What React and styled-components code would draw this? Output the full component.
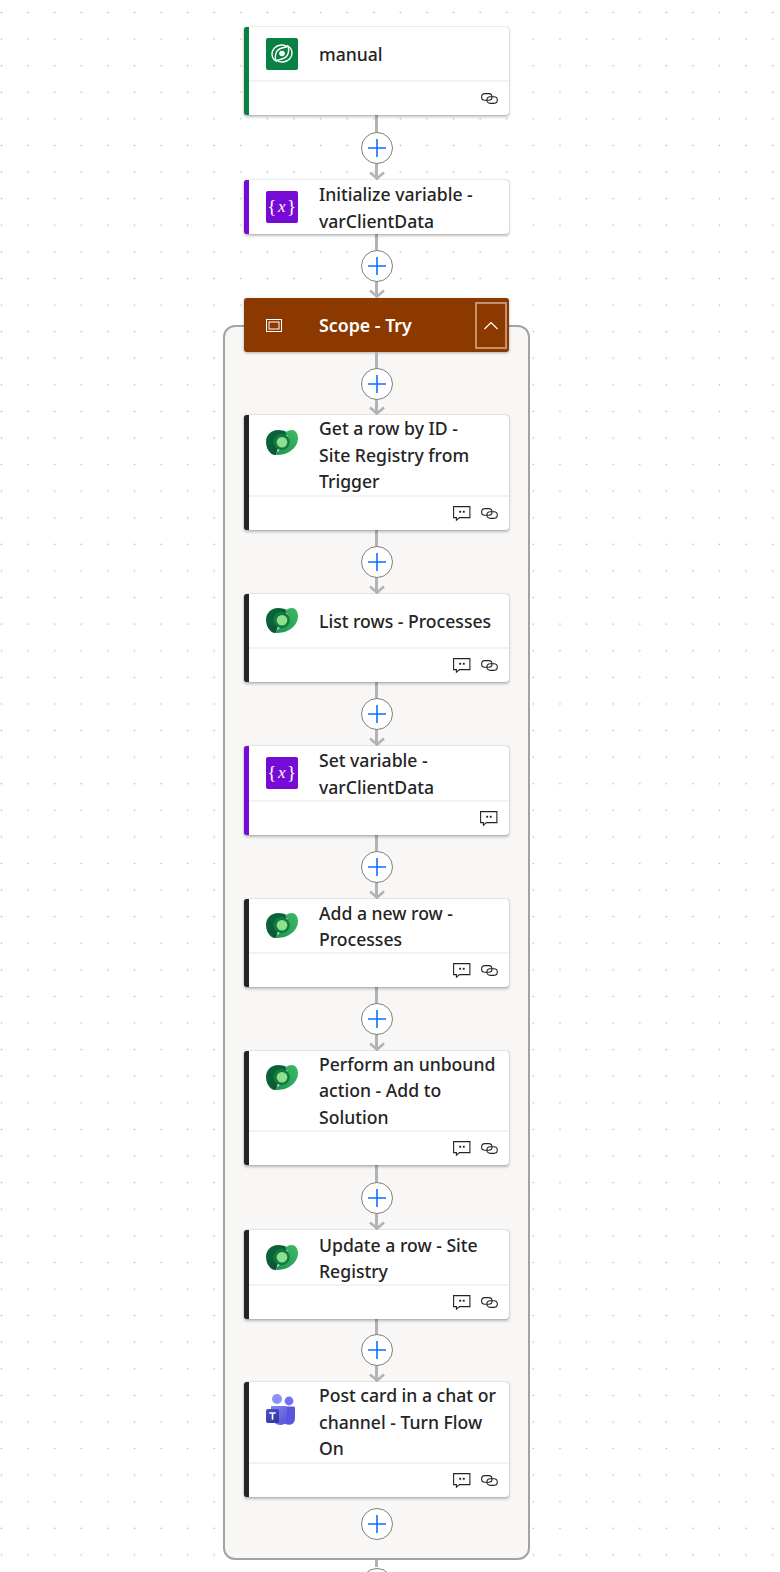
import React from 'react'
import styled, { createGlobalStyle } from 'styled-components'

const GlobalStyle = createGlobalStyle`
html, body {
    margin: 0;
    height: 1572px;
    overflow: hidden;
    background: #fff;
}
`

const Canvas = styled.div`
box-sizing: border-box;
height: 1572px;
overflow: hidden;
padding: 27px 27px 0 0;
display: flex;
flex-direction: column;
align-items: center;
font-family: "Noto Sans", "Open Sans", sans-serif;
background-color: #fff;
background-image: radial-gradient(circle, #bdbdbd 0.7px, transparent 1.1px);
background-size: 26.6px 26.6px;
background-position: -11.8px -0.8px;
`

const CardBox = styled.div`
position: relative;
z-index: 1;
box-sizing: border-box;
flex: none;
width: 265px;
background: #fff;
border-radius: 3px;
border-left: 5px solid ${p => p.$accent};
box-shadow: 0 0 1px rgba(0, 0, 0, 0.45), 0 1.5px 3px rgba(0, 0, 0, 0.25);
`

const CardHead = styled.div`
display: flex;
align-items: ${p => (p.$tall ? 'flex-start' : 'center')};
min-height: 53.3px;
box-sizing: border-box;
padding-left: 17px;
`

const IconSlot = styled.div`
flex: none;
width: 32px;
height: 32px;
margin-right: 21px;
display: flex;
align-items: center;
justify-content: flex-start;
${p => p.$tall && 'margin-top: 11px;'}
`

const Title = styled.div`
font-size: 17.6px;
font-weight: 500;
line-height: 26.5px;
color: #242424;
padding-right: 6px;
margin-top: ${p => (p.$tall ? 0 : 1)}px;
margin-bottom: ${p => (p.$tall ? 0 : -1)}px;
white-space: nowrap;
`

const CardFoot = styled.div`
display: flex;
align-items: center;
justify-content: flex-end;
gap: 10px;
height: 35px;
box-sizing: border-box;
padding-right: 11px;
border-top: 2px solid #f2f2f2;
`

const VarBadge = styled.div`
width: 32px;
height: 32px;
border-radius: 2px;
background: #770bd6;
color: #fff;
display: flex;
align-items: center;
justify-content: center;
font-family: "Liberation Serif", serif;
font-size: 19px;
letter-spacing: 0.5px;
line-height: 1;
& i { font-size: 17px; margin: 0 1px; }
`

const GreenBadge = styled.div`
width: 32px;
height: 32px;
border-radius: 2px;
background: #088142;
display: flex;
align-items: center;
justify-content: center;
`

const Connector = styled.div`
position: relative;
flex: none;
width: 32px;
height: ${p => p.$h || 64}px;
display: flex;
align-items: center;
justify-content: center;
&::before {
    content: '';
    display: ${p => (p.$bare ? 'none' : 'block')};
    position: absolute;
    left: 14.5px;
    top: 0;
    bottom: 1px;
    width: 3px;
    background: #b3b3b3;
}
`

const AddButton = styled.div`
position: relative;
flex: none;
box-sizing: border-box;
width: 32px;
height: 32px;
border-radius: 50%;
background: #fff;
border: 1px solid #808080;
display: flex;
align-items: center;
justify-content: center;
`

const ArrowHead = styled.svg`
position: absolute;
left: 8px;
bottom: 0;
width: 16px;
height: 9px;
`

const ScopeFrame = styled.div`
box-sizing: border-box;
flex: none;
width: 307px;
margin-top: 27px;
padding-bottom: 7px;
display: flex;
flex-direction: column;
align-items: center;
background: #f8f7f6;
border: 2.6px solid #a3a3a3;
border-radius: 12px;
`

const ScopeHead = styled.div`
flex: none;
box-sizing: border-box;
width: 265px;
height: 54px;
margin-top: -28.6px;
padding-left: 22px;
display: flex;
align-items: center;
background: #8c3900;
border-radius: 3px;
box-shadow: 0 1px 3px rgba(0, 0, 0, 0.3);
`

const ScopeTitle = styled.div`
flex: 1;
font-size: 17.8px;
font-weight: 600;
color: #fff;
margin-left: 37px;
`

const CollapseButton = styled.div`
box-sizing: border-box;
width: 32px;
height: 47px;
margin-right: 2px;
border: 2px solid rgba(255, 255, 255, 0.45);
display: flex;
align-items: center;
justify-content: center;
`

const Plus = () => (
    <svg width="20" height="20" viewBox="0 0 20 20">
        <path d="M10 1v18M1 10h18" stroke="#0f6fff" strokeWidth="1.6" fill="none" />
    </svg>
)

const LinkIcon = () => (
    <svg width="17" height="11" viewBox="0 0 17 11" fill="none" stroke="#242424" strokeWidth="1.1">
        <rect x=".6" y=".6" width="10.4" height="6.6" rx="3.3" />
        <rect x="5.9" y="3.8" width="10.4" height="6.6" rx="3.3" />
    </svg>
)

const Comment = () => (
    <svg width="18" height="15" viewBox="0 0 18 15" fill="none">
        <path d="M.6.6h16.3v11H6.4l-3 2.6v-2.6H.6z" stroke="#242424" strokeWidth="1.1" />
        <rect x="6.2" y="4.8" width="1.9" height="1.9" fill="#242424" />
        <rect x="9.8" y="4.8" width="1.9" height="1.9" fill="#242424" />
    </svg>
)

const DataverseColor = () => (
    <svg width="32" height="25" viewBox="0 0 32 25">
        <defs>
            <linearGradient id="dvDark" x1="0" y1="0" x2="1" y2="1">
                <stop offset="0" stopColor="#0a6a3a" />
                <stop offset="1" stopColor="#0c4f2f" />
            </linearGradient>
            <linearGradient id="dvLight" x1="0" y1="1" x2="1" y2="0">
                <stop offset="0" stopColor="#1c9650" />
                <stop offset="1" stopColor="#3dba64" />
            </linearGradient>
        </defs>
        <path d="M12 0C5 0 0 5 0 12c0 5 2 9 5 11.500 1.500 1.200 3.500 1.500 5 1.500l3-10L22 3C20 1 16 0 12 0z" fill="url(#dvDark)" />
        <path d="M9.500 24.800c11 1.200 22.500-6.300 22.500-16.800C32 3 29 0 26 0c-3 0-5 1-7 3 4 3 5 9 1 13-2.500 2.500-8 3-10.500 8.800z" fill="url(#dvLight)" />
        <circle cx="15.500" cy="12" r="8.300" fill="#0f7a42" />
        <circle cx="16" cy="12.200" r="5.300" fill="#8ee08d" />
    </svg>
)

const DataverseWhite = () => (
    <svg width="22" height="19" viewBox="0 0 22 19" fill="none" stroke="#fff" strokeWidth="1.400">
        <path d="M16 2.500C14 1 12 .8 10 1 4 1.500 1 6 1 10c0 3 1.500 5.500 4 7-1.500-5-.5-11.500 6-13 2-.5 4-1 5-1.500z" />
        <path d="M6 16.500c2 1.500 4 1.700 6 1.500 6-.5 9-5 9-9 0-3-1.500-5.500-4-7 1.500 5 .5 11.500-6 13-2 .5-4 1-5 1.500z" />
        <circle cx="11" cy="9.500" r="2.800" fill="#fff" stroke="none" />
    </svg>
)

const TeamsLogo = () => (
    <svg width="29" height="31" viewBox="0 0 29 31">
        <defs>
            <linearGradient id="tmBody" x1="0" y1="0" x2="1" y2="1">
                <stop offset="0" stopColor="#8288ee" />
                <stop offset="1" stopColor="#5a4fd8" />
            </linearGradient>
            <linearGradient id="tmSquare" x1="0" y1="0" x2="1" y2="1">
                <stop offset="0" stopColor="#4a55c8" />
                <stop offset="1" stopColor="#30329b" />
            </linearGradient>
        </defs>
        <circle cx="23" cy="7" r="4.400" fill="#6f72f2" />
        <circle cx="11" cy="5" r="5" fill="#8f93f5" />
        <path d="M18 12.500h9.500c.8 0 1.500.7 1.500 1.500v10c0 4-2.500 6.800-6 6.800-2.500 0-4-1-5-2z" fill="#5b54de" />
        <path d="M5 12h14c1 0 2 1 2 2v11c0 3-2.500 6-6.500 6-4.500 0-7.500-3-9.500-7z" fill="url(#tmBody)" />
        <rect x="0" y="15" width="13" height="14" rx="2" fill="url(#tmSquare)" />
        <path d="M3.200 18.300h6.600v1.500H7.300v6H5.700v-6H3.200z" fill="#fff" />
    </svg>
)

const VarIcon = () => <VarBadge>{'{'}<i>x</i>{'}'}</VarBadge>
const ManualIcon = () => <GreenBadge><DataverseWhite /></GreenBadge>

const Card = ({ title, accent, icon, tall, comment, link }) => (
    <CardBox $accent={accent}>
        <CardHead $tall={tall}>
            <IconSlot $tall={tall}>{icon}</IconSlot>
            <Title $tall={tall}>{title}</Title>
        </CardHead>
        {(comment || link) && (
            <CardFoot>
                {comment && <Comment />}
                {link && <LinkIcon />}
            </CardFoot>
        )}
    </CardBox>
)

const Add = ({ h, bare }) => (
    <Connector $h={h} $bare={bare}>
        <AddButton><Plus /></AddButton>
        {!bare && (
            <ArrowHead viewBox="0 0 16 9">
                <path d="M1 1.500l7 6 7-6" stroke="#b3b3b3" strokeWidth="2.600" fill="none" />
            </ArrowHead>
        )}
    </Connector>
)

const BLACK = '#242424'
const PURPLE = '#770bd6'

const steps = [
    { title: <>Get a row by ID -<br />Site Registry from<br />Trigger</>, icon: <DataverseColor />, tall: true, comment: true, link: true, gap: 63 },
    { title: 'List rows - Processes', icon: <DataverseColor />, comment: true, link: true },
    { title: <>Set variable -<br />varClientData</>, icon: <VarIcon />, accent: PURPLE, comment: true, gap: 64.5 },
    { title: <>Add a new row -<br />Processes</>, icon: <DataverseColor />, comment: true, link: true },
    { title: <>Perform an unbound<br />action - Add to<br />Solution</>, icon: <DataverseColor />, tall: true, comment: true, link: true },
    { title: <>Update a row - Site<br />Registry</>, icon: <DataverseColor />, comment: true, link: true, gap: 65 },
    { title: <>Post card in a chat or<br />channel - Turn Flow<br />On</>, icon: <TeamsLogo />, tall: true, comment: true, link: true, gap: 63.5 },
]

export default function App() {
    return (
        <>
            <GlobalStyle />
            <Canvas>
                <Card title="manual" accent="#088142" icon={<ManualIcon />} link />
                <Add h={65} />
                <Card title={<>Initialize variable -<br />varClientData</>} accent={PURPLE} icon={<VarIcon />} />
                <Add />
                <ScopeFrame>
                    <ScopeHead>
                        <svg width="16" height="13" viewBox="0 0 16 13" fill="none" stroke="#fff" strokeWidth="1">
                            <rect x=".5" y=".5" width="15" height="12" />
                            <rect x="3" y="3" width="10" height="7" />
                        </svg>
                        <ScopeTitle>Scope - Try</ScopeTitle>
                        <CollapseButton>
                            <svg width="16" height="9" viewBox="0 0 16 9" fill="none" stroke="#fff" strokeWidth="1.2">
                                <path d="M1.500 8L8 1.500 14.500 8" />
                            </svg>
                        </CollapseButton>
                    </ScopeHead>
                    {steps.map(({ gap, ...s }, i) => (
                        <React.Fragment key={i}>
                            <Add h={gap} />
                            <Card accent={BLACK} {...s} />
                        </React.Fragment>
                    ))}
                    <Add h={54} bare />
                </ScopeFrame>
                <Connector $h={8} />
                <AddButton />
            </Canvas>
        </>
    )
}
